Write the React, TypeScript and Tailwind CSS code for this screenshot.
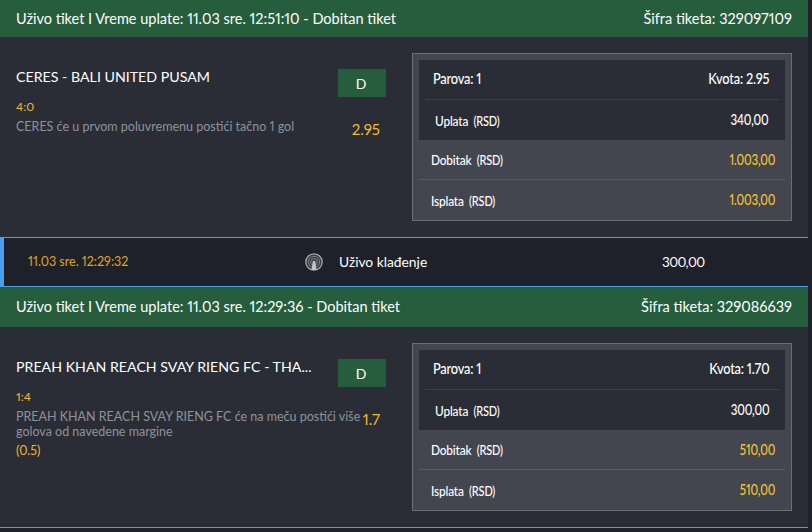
import React from "react";

interface Ticket {
    time: string;
    code: string;
    title: string;
    score: string;
    desc: string;
    margin?: string;
    odds: string;
    kvota: string;
    uplata: string;
    dobitak: string;
    tall?: boolean;
}

const tickets: Ticket[] = [
    {
        time: "11.03 sre. 12:51:10",
        code: "329097109",
        title: "CERES - BALI UNITED PUSAM",
        score: "4:0",
        desc: "CERES će u prvom poluvremenu postići tačno 1 gol",
        odds: "2.95",
        kvota: "2.95",
        uplata: "340,00",
        dobitak: "1.003,00",
    },
    {
        time: "11.03 sre. 12:29:36",
        code: "329086639",
        title: "PREAH KHAN REACH SVAY RIENG FC - THA...",
        score: "1:4",
        desc: "PREAH KHAN REACH SVAY RIENG FC će na meču postići više golova od navedene margine",
        margin: "(0.5)",
        odds: "1.7",
        kvota: "1.70",
        uplata: "300,00",
        dobitak: "510,00",
        tall: true,
    },
];

function Label({ name }: { name: string }) {
    return (
        <span className="inline-block origin-left translate-y-[1px] scale-x-[0.88] whitespace-nowrap text-[13.5px] font-medium tracking-[-0.2px] text-white">
            {name}
            <span className="ml-[6px] text-[12.5px]">(RSD)</span>
        </span>
    );
}

function Amount({ children, gold }: { children: React.ReactNode; gold?: boolean }) {
    return (
        <span className={`inline-block origin-right scale-x-[0.8] whitespace-nowrap text-[14.5px] font-medium tracking-[-0.2px] ${gold ? "text-[#f7c331]" : "text-white"}`}>
            {children}
        </span>
    );
}

function TicketCard({ ticket }: { ticket: Ticket }) {
    return (
        <div>
            {/* Header */}
            <div className={`flex items-center justify-between bg-[#265d3c] px-4 text-[14.5px] text-white ${ticket.tall ? "h-[40px]" : "h-[37px]"}`}>
                <span>Uživo tiket I Vreme uplate: {ticket.time} - Dobitan tiket</span>
                <span>Šifra tiketa: {ticket.code}</span>
            </div>

            <div className="flex h-[200px] bg-[#2a2d36]">
                {/* Match */}
                <div className="w-[412px] shrink-0 pl-4 pt-8">
                    <div className="flex items-start">
                        <div className="w-[322px] shrink-0">
                            <div className="-mt-[2px] whitespace-nowrap text-[14.2px] leading-[20px] text-white">{ticket.title}</div>
                        </div>
                        <div className="flex h-[28px] w-[48px] items-center justify-center bg-[#265d3c] pr-[2px] text-[14px] text-white">D</div>
                    </div>
                    <div className="mt-[1px] flex w-[364px] items-start">
                        <div className="min-w-0 flex-1">
                            <div className="text-[12px] leading-[18px] text-[#f0b92d]">{ticket.score}</div>
                            <div className="mt-[3px] text-[12.5px] leading-[15px] text-[#8f929b]">{ticket.desc}</div>
                            {ticket.margin && <div className="mt-[4px] text-[12.5px] leading-[15px] text-[#f0b92d]">{ticket.margin}</div>}
                        </div>
                        <div className="mt-[21px] shrink-0 text-right text-[15px] leading-[20px] text-[#f4bb2c]">{ticket.odds}</div>
                    </div>
                </div>

                {/* Summary */}
                <div className="pt-4">
                    <div className="w-[380px] border border-[#6b6e76] bg-[#43464f] px-[6px] pt-[6px]">
                        <div className="bg-[#2a2d36]">
                            <div className="mx-[6px] flex h-[40px] items-center justify-between border-b border-[#3e414a] pl-2 pr-[10px] text-[14.5px] font-medium tracking-[-0.2px] text-white">
                                <span className="inline-block origin-left -translate-y-[1px] scale-x-[0.88] whitespace-nowrap">Parova: 1</span>
                                <span className="inline-block origin-right -translate-y-[1px] scale-x-[0.88] whitespace-nowrap">Kvota: {ticket.kvota}</span>
                            </div>
                            <div className="mx-[6px] flex h-[40px] items-center justify-between pl-[10px] pr-[10px]">
                                <Label name="Uplata" />
                                <Amount>{ticket.uplata}</Amount>
                            </div>
                        </div>
                        <div className="flex h-[40px] items-center justify-between border-b border-[#5a5d65] pl-3 pr-[10px]">
                            <Label name="Dobitak" />
                            <Amount gold>{ticket.dobitak}</Amount>
                        </div>
                        <div className="flex h-[40px] items-center justify-between pl-3 pr-[10px]">
                            <Label name="Isplata" />
                            <Amount gold>{ticket.dobitak}</Amount>
                        </div>
                    </div>
                </div>
            </div>
        </div>
    );
}

function LiveIcon() {
    return (
        <svg width="18" height="18" viewBox="0 0 18 18" fill="none">
            <circle cx="9" cy="9" r="8.2" fill="#3a3d44" stroke="#a5a7ab" strokeWidth="1.3" />
            <circle cx="9" cy="9" r="5.6" stroke="#7d8086" strokeWidth="1" />
            <circle cx="9" cy="9" r="3.4" stroke="#7d8086" strokeWidth="1" />
            <path d="M7.8 8h2.4l1.3 9h-5z" fill="#c4c5c8" />
        </svg>
    );
}

export default function App() {
    return (
        <div className="h-[532px] w-[812px] overflow-hidden bg-[#1e2129] font-['Lato','Open_Sans',sans-serif] proportional-nums">
            <div className="w-[808px]">
                <TicketCard ticket={tickets[0]} />

                {/* Transaction row */}
                <div className="flex h-[50px] items-center border-y border-l-4 border-[#4a9eea] bg-[#1e2129] text-[13.8px] text-white">
                    <span className="w-[301px] shrink-0 pl-6 text-[12.5px] text-[#e0a326]">11.03 sre. 12:29:32</span>
                    <span className="flex w-[357px] shrink-0 items-center gap-4">
                        <LiveIcon />
                        Uživo klađenje
                    </span>
                    <span className="text-[13.5px] tracking-[-0.6px]">300,00</span>
                </div>

                <TicketCard ticket={tickets[1]} />
                <div className="h-[1px] bg-[#4a9eea]" />
            </div>
        </div>
    );
}
